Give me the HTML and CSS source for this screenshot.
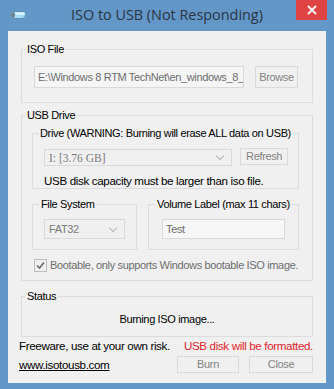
FILE: index.html
```html
<!DOCTYPE html>
<html lang="en">
	<head>
		<title>ISO to USB</title>
		<link rel="stylesheet" href="styles.css">
	</head>
	<body>
		<div class="window">
			<div class="titlebar">
				<div class="appicon">
					<svg width="16" height="8" viewBox="0 0 16 8">
						<rect x="0.5" y="0.5" width="15" height="7" rx="3.5" fill="#a9dcf5" stroke="#5d8fb5"/>
						<rect x="1" y="1" width="4" height="6" rx="2.5" fill="#6f8597"/>
						<rect x="5" y="1.5" width="10" height="2" rx="1" fill="#e4f6ff"/>
					</svg>
				</div>
				<div class="title">ISO to USB (Not Responding)</div>
				<div class="controls">
					<span class="close">
						<svg width="10" height="10" viewBox="0 0 10 10">
							<path d="M1 1 L9 9 M9 1 L1 9" stroke="#fff" stroke-width="1.8"/>
						</svg>
					</span>
				</div>
			</div>

			<div class="client">
				<fieldset class="group iso">
					<legend>ISO File</legend>
					<div class="row">
						<div class="edit path">E:\Windows 8 RTM TechNet\en_windows_8_x64_dvd.iso</div>
						<span class="btn browse">Browse</span>
					</div>
				</fieldset>

				<fieldset class="group usb">
					<legend>USB Drive</legend>
					<fieldset class="group drive">
						<legend>Drive (WARNING: Burning will erase ALL data on USB)</legend>
						<div class="row">
							<div class="combo drivelist"><span class="sysfont">I: [3.76 GB]</span><span class="arrow"></span></div>
							<span class="btn refresh">Refresh</span>
						</div>
						<div class="note">USB disk capacity must be larger than iso file.</div>
					</fieldset>

					<div class="pair">
						<fieldset class="group fs">
							<legend>File System</legend>
							<div class="combo fat"><span>FAT32</span><span class="arrow"></span></div>
						</fieldset>
						<fieldset class="group vol">
							<legend>Volume Label (max 11 chars)</legend>
							<div class="edit label">Test</div>
						</fieldset>
					</div>

					<div class="check">
						<span class="box">
							<svg width="9" height="9" viewBox="0 0 9 9">
								<path d="M1 4.5 L3.5 7 L8 1.5" stroke="#6b6b6b" stroke-width="1.6" fill="none"/>
							</svg>
						</span>
						<span>Bootable, only supports Windows bootable ISO image.</span>
					</div>
				</fieldset>

				<fieldset class="group status">
					<legend>Status</legend>
					<div class="statustext">Burning ISO image...</div>
				</fieldset>

				<div class="footer">
					<div class="line">
						<span>Freeware, use at your own risk.</span>
						<span class="warn">USB disk will be formatted.</span>
					</div>
					<div class="line">
						<a class="site" href="#">www.isotousb.com</a>
						<div class="btns">
							<span class="btn burn">Burn</span>
							<span class="btn closebtn">Close</span>
						</div>
					</div>
				</div>
			</div>
		</div>
	</body>
</html>
```

FILE: styles.css
```css
body, html {
	margin:0;
	padding:0;
	font-family:"Liberation Sans",Arial,sans-serif;
	color:#000;
}
.window {
	width:334px;
	height:389px;
	background-color:#6397c8;
	display:flex;
	flex-direction:column;
}
.titlebar {
	height:31px;
	display:grid;
	grid-template-columns:1fr auto 1fr;
	align-items:start;
}
.appicon {
	padding:11px 0 0 10px;
}
.appicon svg {
	display:block;
}
.title {
	font-family:"Open Sans",sans-serif;
	font-size:14.4px;
	line-height:20px;
	padding-top:5px;
	color:#2b3440;
}
.controls {
	display:flex;
	justify-content:flex-end;
	padding-right:7px;
}
.close {
	width:31px;
	height:20px;
	background-color:#e04343;
	display:flex;
	align-items:center;
	justify-content:center;
}
.client {
	margin:0 8px 6px 8px;
	height:352px;
	background-color:#f0f0f0;
	font-size:11px;
	letter-spacing:-0.35px;
	white-space:nowrap;
	overflow:hidden;
}
.group {
	border:1px solid #dcdcdc;
	margin:0;
	padding:0;
	min-width:0;
}
.group legend {
	padding:0 2px;
	line-height:13px;
}
.iso {
	margin:12px 13px 0 13px;
	padding:10px 14px 14px 12px;
}
.iso legend {
	margin-left:-9px;
}
.row {
	display:flex;
	gap:11px;
	align-items:flex-start;
}
.edit {
	box-sizing:border-box;
	height:22px;
	line-height:20px;
	border:1px solid #d9d9d9;
	background-color:#f5f5f5;
	color:#6d6d6d;
	padding:0 3px;
	overflow:hidden;
}
.path {
	width:210px;
}
.btn {
	display:inline-block;
	border:1px solid #d9d9d9;
	background-color:#f0f0f0;
	color:#838383;
	text-align:center;
}
.browse {
	width:41px;
	height:20px;
	line-height:20px;
}
.usb {
	margin:6px 13px 0 13px;
	padding:5px 13px 8px 10px;
}
.usb legend {
	margin-left:-7px;
}
.drive {
	padding:8px 10px 0 11px;
}
.drive legend {
	margin-left:-6px;
}
.combo {
	border:1px solid #d9d9d9;
	background-color:#f0f0f0;
	color:#7a7a7a;
	display:flex;
	align-items:center;
	justify-content:space-between;
	padding:0 3px 0 4px;
	box-sizing:border-box;
}
.arrow {
	width:5px;
	height:5px;
	border-right:1px solid #b5b5b5;
	border-bottom:1px solid #b5b5b5;
	transform:rotate(45deg);
	margin:0 5px 3px 0;
}
.drivelist {
	width:189px;
	height:17px;
	margin-top:1px;
}
.sysfont {
	font-family:"Liberation Serif",serif;
	font-size:11.5px;
	letter-spacing:0;
}
.refresh {
	width:46px;
	height:15px;
	line-height:15px;
	margin-left:-3px;
}
.note {
	font-size:11.6px;
	line-height:15px;
	margin-top:7px;
}
.pair {
	display:flex;
	gap:11px;
	margin-top:9px;
}
.fs {
	box-sizing:border-box;
	width:105px;
	padding:8px 0 10px 11px;
}
.fs legend {
	margin-left:-5px;
}
.fat {
	width:81px;
	height:20px;
}
.vol {
	flex:1;
	padding:8px 0 10px 13px;
}
.vol legend {
	margin-left:-7px;
}
.label {
	width:123px;
	height:20px;
	line-height:18px;
	background-color:#f7f7f7;
}
.check {
	display:flex;
	align-items:center;
	gap:3px;
	margin:9px 0 0 2px;
	color:#6d6d6d;
	line-height:13px;
}
.box {
	width:11px;
	height:11px;
	border:1px solid #bcbcbc;
	background-color:#f0f0f0;
	display:flex;
	align-items:center;
	justify-content:center;
}
.status {
	margin:9px 13px 0 13px;
	padding:9px 0 10px 0;
}
.status legend {
	margin-left:3px;
}
.statustext {
	text-align:center;
	line-height:14px;
}
.footer {
	margin:2px 13px 0 11px;
	font-size:11.6px;
}
.line {
	display:flex;
	justify-content:space-between;
	align-items:center;
	line-height:14px;
}
.line + .line {
	margin-top:3px;
}
.warn {
	color:#e11d2a;
}
.site {
	color:#000;
}
.btns {
	display:flex;
	gap:10px;
	font-size:11px;
}
.burn, .closebtn {
	height:15px;
	line-height:15px;
}
.burn {
	width:60px;
}
.closebtn {
	width:62px;
}
```
